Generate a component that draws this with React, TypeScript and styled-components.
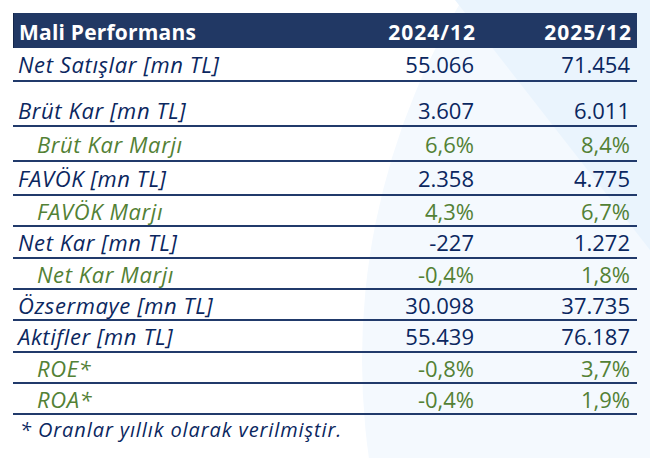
import React from "react";
import styled, { createGlobalStyle } from "styled-components";

const GlobalStyle = createGlobalStyle`
  html, body {
    margin: 0;
    padding: 0;
    background: #ffffff;
  }
  body {
    font-family: "Open Sans", "Liberation Sans", sans-serif;
  }
`;

const NAVY = "#0b2760";
const GREEN = "#538135";
const RULE = "#213a6b";

type RowData = {
  label: string;
  a: string;
  b: string;
  sub?: boolean;
  height: number;
  offset?: number;
};

const rows: RowData[] = [
  { label: "Net Satışlar [mn TL]", a: "55.066", b: "71.454", height: 34 },
  { label: "Brüt Kar [mn TL]", a: "3.607", b: "6.011", height: 45, offset: 13 },
  { label: "Brüt Kar Marjı", a: "6,6%", b: "8,4%", sub: true, height: 35 },
  { label: "FAVÖK [mn TL]", a: "2.358", b: "4.775", height: 34 },
  { label: "FAVÖK Marjı", a: "4,3%", b: "6,7%", sub: true, height: 31 },
  { label: "Net Kar [mn TL]", a: "-227", b: "1.272", height: 32 },
  { label: "Net Kar Marjı", a: "-0,4%", b: "1,8%", sub: true, height: 31 },
  { label: "Özsermaye [mn TL]", a: "30.098", b: "37.735", height: 31 },
  { label: "Aktifler [mn TL]", a: "55.439", b: "76.187", height: 32 },
  { label: "ROE*", a: "-0,8%", b: "3,7%", sub: true, height: 31 },
  { label: "ROA*", a: "-0,4%", b: "1,9%", sub: true, height: 31 },
];

const Page = styled.div`
  position: relative;
  width: 650px;
  height: 458px;
  overflow: hidden;
  background: #ffffff;
`;

const Backdrop = styled.svg`
  position: absolute;
  inset: 0;
  z-index: 0;
`;

const Content = styled.div`
  position: relative;
  z-index: 1;
  padding: 13px 13px 0 13px;
`;

const Table = styled.div`
  width: 624px;
  display: flex;
  flex-direction: column;
`;

const HeaderRow = styled.div`
  display: grid;
  grid-template-columns: 318px 150px 156px;
  height: 35px;
  align-items: center;
  background: #213864;
  border-left: 1px solid #14264a;
  box-sizing: border-box;
  padding-top: 3px;
`;

const HeaderCell = styled.div<{ $align?: "left" | "right" }>`
  color: #ffffff;
  font-weight: 700;
  font-size: 21px;
  letter-spacing: ${(p) => (p.$align === "right" ? "1px" : "0.2px")};
  text-align: ${(p) => p.$align ?? "left"};
  padding: ${(p) => (p.$align === "right" ? "0 6px 0 0" : "0 0 0 5px")};
  white-space: nowrap;
`;

const BodyRow = styled.div<{ $h: number; $offset: number }>`
  display: grid;
  grid-template-columns: 318px 150px 156px;
  height: ${(p) => p.$h}px;
  align-items: center;
  box-sizing: border-box;
  border-bottom: 2px solid ${RULE};
  padding-top: ${(p) => p.$offset}px;
`;

const Label = styled.div<{ $sub: boolean }>`
  font-style: italic;
  font-weight: 500;
  font-size: 22px;
  letter-spacing: 0.6px;
  color: ${(p) => (p.$sub ? GREEN : NAVY)};
  padding-left: ${(p) => (p.$sub ? 24 : 5)}px;
  white-space: nowrap;
`;

const Value = styled.div<{ $sub: boolean }>`
  font-size: 22px;
  font-weight: 500;
  color: ${(p) => (p.$sub ? GREEN : NAVY)};
  text-align: right;
  padding-right: 7px;
`;

const Footnote = styled.div`
  font-style: italic;
  font-weight: 500;
  font-size: 20px;
  color: ${NAVY};
  padding: 1px 0 0 7px;
  letter-spacing: 0.9px;
  white-space: nowrap;
`;

export default function App() {
  return (
    <Page>
      <GlobalStyle />
      <Backdrop width={650} height={458} viewBox="0 0 650 458">
        <circle cx={1060} cy={360} r={698} fill="#f4f9fe" />
        <polygon points="455,0 650,0 650,250" fill="#eaf4fd" />
      </Backdrop>
      <Content>
        <Table>
          <HeaderRow>
            <HeaderCell>Mali Performans</HeaderCell>
            <HeaderCell $align="right">2024/12</HeaderCell>
            <HeaderCell $align="right">2025/12</HeaderCell>
          </HeaderRow>
          {rows.map((r) => (
            <BodyRow key={r.label} $h={r.height} $offset={r.offset ?? 0}>
              <Label $sub={!!r.sub}>{r.label}</Label>
              <Value $sub={!!r.sub}>{r.a}</Value>
              <Value $sub={!!r.sub}>{r.b}</Value>
            </BodyRow>
          ))}
        </Table>
        <Footnote>* Oranlar yıllık olarak verilmiştir.</Footnote>
      </Content>
    </Page>
  );
}
